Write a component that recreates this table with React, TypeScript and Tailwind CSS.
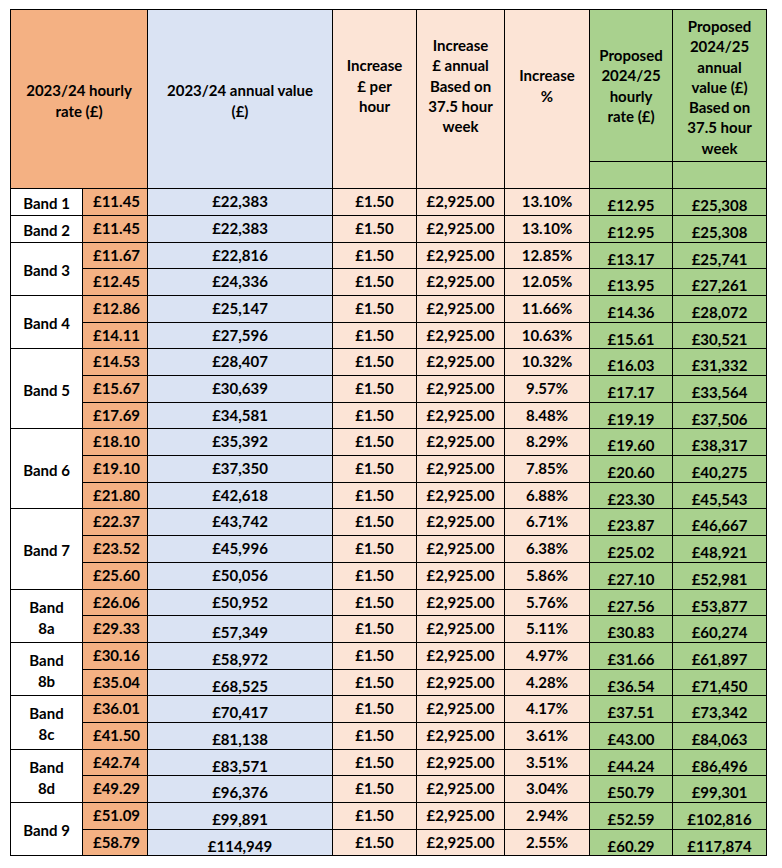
import React from "react";

type Row = [string, string, string, string, string];

const bands: { label: React.ReactNode; rows: Row[] }[] = [
  { label: "Band 1", rows: [["£11.45", "£22,383", "13.10%", "£12.95", "£25,308"]] },
  { label: "Band 2", rows: [["£11.45", "£22,383", "13.10%", "£12.95", "£25,308"]] },
  {
    label: "Band 3",
    rows: [
      ["£11.67", "£22,816", "12.85%", "£13.17", "£25,741"],
      ["£12.45", "£24,336", "12.05%", "£13.95", "£27,261"],
    ],
  },
  {
    label: "Band 4",
    rows: [
      ["£12.86", "£25,147", "11.66%", "£14.36", "£28,072"],
      ["£14.11", "£27,596", "10.63%", "£15.61", "£30,521"],
    ],
  },
  {
    label: "Band 5",
    rows: [
      ["£14.53", "£28,407", "10.32%", "£16.03", "£31,332"],
      ["£15.67", "£30,639", "9.57%", "£17.17", "£33,564"],
      ["£17.69", "£34,581", "8.48%", "£19.19", "£37,506"],
    ],
  },
  {
    label: "Band 6",
    rows: [
      ["£18.10", "£35,392", "8.29%", "£19.60", "£38,317"],
      ["£19.10", "£37,350", "7.85%", "£20.60", "£40,275"],
      ["£21.80", "£42,618", "6.88%", "£23.30", "£45,543"],
    ],
  },
  {
    label: "Band 7",
    rows: [
      ["£22.37", "£43,742", "6.71%", "£23.87", "£46,667"],
      ["£23.52", "£45,996", "6.38%", "£25.02", "£48,921"],
      ["£25.60", "£50,056", "5.86%", "£27.10", "£52,981"],
    ],
  },
  {
    label: (
      <>
        Band
        <br />
        8a
      </>
    ),
    rows: [
      ["£26.06", "£50,952", "5.76%", "£27.56", "£53,877"],
      ["£29.33", "£57,349", "5.11%", "£30.83", "£60,274"],
    ],
  },
  {
    label: (
      <>
        Band
        <br />
        8b
      </>
    ),
    rows: [
      ["£30.16", "£58,972", "4.97%", "£31.66", "£61,897"],
      ["£35.04", "£68,525", "4.28%", "£36.54", "£71,450"],
    ],
  },
  {
    label: (
      <>
        Band
        <br />
        8c
      </>
    ),
    rows: [
      ["£36.01", "£70,417", "4.17%", "£37.51", "£73,342"],
      ["£41.50", "£81,138", "3.61%", "£43.00", "£84,063"],
    ],
  },
  {
    label: (
      <>
        Band
        <br />
        8d
      </>
    ),
    rows: [
      ["£42.74", "£83,571", "3.51%", "£44.24", "£86,496"],
      ["£49.29", "£96,376", "3.04%", "£50.79", "£99,301"],
    ],
  },
  {
    label: "Band 9",
    rows: [
      ["£51.09", "£99,891", "2.94%", "£52.59", "£102,816"],
      ["£58.79", "£114,949", "2.55%", "£60.29", "£117,874"],
    ],
  },
];

const cellBase = "border border-black p-0 text-center whitespace-nowrap";
const top = "align-top pt-[3px] leading-[18px]";
const low = "align-top pt-[7px] leading-[18px]";

function rowHeightClass(i: number) {
  const a = Math.round(189.3 + 26.68 * i);
  const b = Math.round(189.3 + 26.68 * (i + 1));
  return b - a >= 27 ? "h-[27px]" : "h-[26px]";
}

export default function App() {
  let idx = 0;
  return (
    <div className="bg-white w-[782px] h-[868px] pt-[9px] pl-[10px] font-[Lato,sans-serif] font-bold text-[15px] leading-[20px] text-black">
      <table className="border-collapse table-fixed w-[757px]">
        <colgroup>
          <col className="w-[72px]" />
          <col className="w-[65px]" />
          <col className="w-[185px]" />
          <col className="w-[84px]" />
          <col className="w-[88px]" />
          <col className="w-[85px]" />
          <col className="w-[83px]" />
          <col className="w-[94px]" />
        </colgroup>
        <thead>
          <tr className="h-[152px]">
            <th colSpan={2} rowSpan={2} className={`${cellBase} bg-[#f4b183] align-middle pt-[3px] leading-[21px] font-bold`}>
              2023/24 hourly
              <br />
              rate (£)
            </th>
            <th rowSpan={2} className={`${cellBase} bg-[#dae3f3] align-middle pt-[3px] leading-[21px] font-bold`}>
              2023/24 annual value
              <br />
              (£)
            </th>
            <th className={`${cellBase} border-b-0 bg-[#fce4d6] align-middle leading-[20.3px] font-bold`}>
              Increase
              <br />£ per
              <br />
              hour
            </th>
            <th className={`${cellBase} border-b-0 bg-[#fce4d6] align-middle leading-[20.3px] font-bold`}>
              Increase
              <br />£ annual
              <br />
              Based on
              <br />
              37.5 hour
              <br />
              week
            </th>
            <th className={`${cellBase} border-b-0 bg-[#fce4d6] align-middle leading-[20.3px] font-bold`}>
              Increase
              <br />%
            </th>
            <th className={`${cellBase} bg-[#a9d18e] align-middle leading-[20.3px] font-bold`}>
              Proposed
              <br />
              2024/25
              <br />
              hourly
              <br />
              rate (£)
            </th>
            <th className={`${cellBase} bg-[#a9d18e] align-middle pt-[3px] leading-[20.3px] font-bold`}>
              Proposed
              <br />
              2024/25
              <br />
              annual
              <br />
              value (£)
              <br />
              Based on
              <br />
              37.5 hour
              <br />
              week
            </th>
          </tr>
          <tr className="h-[27px]">
            <th className={`${cellBase} border-t-0 bg-[#fce4d6]`}></th>
            <th className={`${cellBase} border-t-0 bg-[#fce4d6]`}></th>
            <th className={`${cellBase} border-t-0 bg-[#fce4d6]`}></th>
            <th className={`${cellBase} bg-[#a9d18e]`}></th>
            <th className={`${cellBase} bg-[#a9d18e]`}></th>
          </tr>
        </thead>
        <tbody>
          {bands.map((b, bi) =>
            b.rows.map((r, ri) => {
              const i = idx++;
              const annualLow = i >= 16;
              return (
                <tr key={`${bi}-${ri}`} className={rowHeightClass(i)}>
                  {ri === 0 && (
                    <td rowSpan={b.rows.length} className={`${cellBase} bg-white align-middle pt-[3px] leading-[21px]`}>
                      {b.label}
                    </td>
                  )}
                  <td className={`${cellBase} bg-[#f4b183] ${top} pl-[3px]`}>{r[0]}</td>
                  <td className={`${cellBase} bg-[#dae3f3] ${annualLow ? low : top}`}>{r[1]}</td>
                  <td className={`${cellBase} bg-[#fce4d6] ${top}`}>£1.50</td>
                  <td className={`${cellBase} bg-[#fce4d6] ${top}`}>£2,925.00</td>
                  <td className={`${cellBase} bg-[#fce4d6] ${top}`}>{r[2]}</td>
                  <td className={`${cellBase} bg-[#a9d18e] ${low}`}>{r[3]}</td>
                  <td className={`${cellBase} bg-[#a9d18e] ${low}`}>{r[4]}</td>
                </tr>
              );
            })
          )}
        </tbody>
      </table>
    </div>
  );
}
